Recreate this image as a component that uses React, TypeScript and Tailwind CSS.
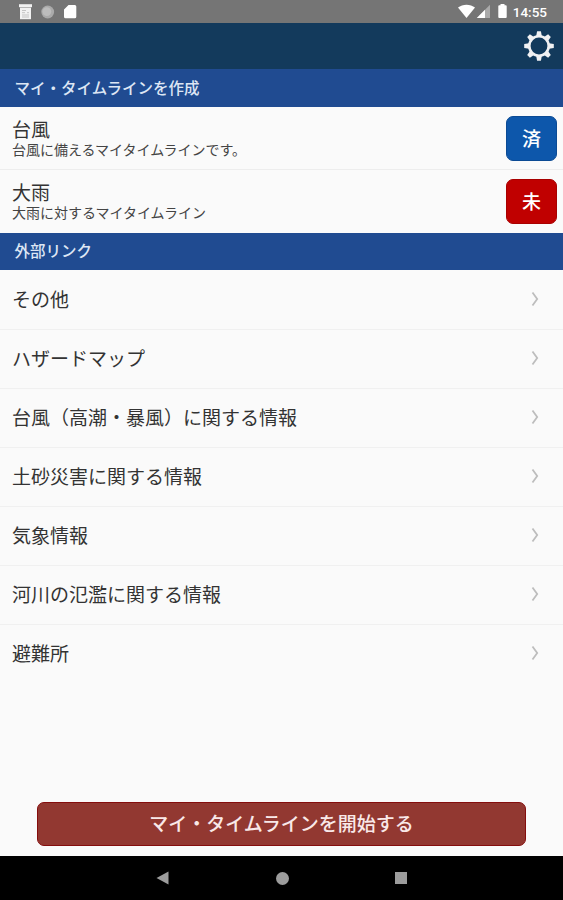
import clsx from 'clsx';

const TIMELINES = [
    { title: '台風', note: '台風に備えるマイタイムラインです。', badge: '済', done: true },
    { title: '大雨', note: '大雨に対するマイタイムライン', badge: '未', done: false },
];

const LINKS = [
    'その他',
    'ハザードマップ',
    '台風（高潮・暴風）に関する情報',
    '土砂災害に関する情報',
    '気象情報',
    '河川の氾濫に関する情報',
    '避難所',
];

const TEETH = [0, 45, 90, 135, 180, 225, 270, 315];

function StatusBar() {
    return (
        <div className="flex h-[23px] shrink-0 items-center bg-[#757575] pl-[18px] pr-[16px]">
            {/* Notifications */}
            <svg width="60" height="23" viewBox="0 0 60 23">
                <path d="M1 4.200h13v3H1z" fill="#f2f2f2" />
                <path d="M2 7.600h11v11.600H2z" fill="#f2f2f2" />
                <path d="M4 10.500h4M4 12.700h3M4 15h7M4 17h7M9 12.700h2" stroke="#c4c4c4" strokeWidth="1" />
                <circle cx="29.700" cy="12" r="6.400" fill="#aaa" />
                <circle cx="28.800" cy="11.600" r="4.400" fill="#bdbdbd" />
                <path d="M50.500 5h6.300a1.500 1.500 0 0 1 1.500 1.500v10.300a1.500 1.500 0 0 1-1.500 1.500h-9.300a1.500 1.500 0 0 1-1.500-1.500V9.500z" fill="#fff" />
            </svg>

            {/* Signal and battery */}
            <svg className="ml-auto" width="52" height="23" viewBox="0 0 52 23">
                <path d="M0 7.600C4.500 3.700 12.500 3.700 17 7.600L8.500 18z" fill="#fff" />
                <path d="M32 4.800V18H18.800z" fill="#aaa" />
                <path d="M27 9.800V18h-8.200z" fill="#fff" />
                <path d="M42.500 4h4v1.300h1.300a.9.9 0 0 1 .9.9v10.900a.9.9 0 0 1-.9.9h-6.600a.9.9 0 0 1-.9-.9V6.200a.9.9 0 0 1 .9-.9h1.300z" fill="#fff" />
            </svg>
            <span className="ml-[3px] font-['Roboto'] text-[13.5px] font-medium leading-[24px] text-white">
                14:55
            </span>
        </div>
    );
}

function GearIcon() {
    return (
        <svg width="30" height="30" viewBox="-15 -15 30 30">
            <circle r="9.700" fill="none" stroke="#f1f1f3" strokeWidth="2.600" />
            {TEETH.map((deg) => (
                <path
                    key={deg}
                    d="M-2.800-10L-1.900-14.800h3.800L2.800-10z"
                    fill="#f1f1f3"
                    transform={`rotate(${deg})`}
                />
            ))}
        </svg>
    );
}

function SectionHeader({ label, className }: { label: string; className: string }) {
    return (
        <h2
            className={clsx(
                'shrink-0 bg-[#204b91] pl-[14.5px] text-[15.5px] font-medium text-[#dde6f4]',
                className,
            )}
        >
            {label}
        </h2>
    );
}

export default function App() {
    return (
        <div className="flex h-[900px] w-[563px] flex-col overflow-hidden bg-[#fafafa] font-['Noto_Sans_CJK_JP',sans-serif] text-[#333]">
            <StatusBar />

            <header className="flex h-[46px] shrink-0 items-center justify-end bg-[#133a5c] pr-[9px]">
                <button type="button" aria-label="設定">
                    <GearIcon />
                </button>
            </header>

            <SectionHeader label="マイ・タイムラインを作成" className="h-[38px] leading-[37px]" />
            <ul className="shrink-0">
                {TIMELINES.map(({ title, note, badge, done }, i) => (
                    <li
                        key={title}
                        className={clsx(
                            'flex h-[63px] items-center justify-between pl-[12px] pr-[6px]',
                            i === 0 && 'border-b border-[#ededed]',
                        )}
                    >
                        <div className="pb-px">
                            <p className="text-[19px] leading-[22px]">{title}</p>
                            <p className="text-[14px] leading-[18px] text-[#444]">{note}</p>
                        </div>
                        <span
                            className={clsx(
                                'h-[45px] w-[51px] rounded-[7px] border text-center text-[19px] font-medium leading-[41px] text-white',
                                done ? 'border-[#0b4a94] bg-[#0d57ab]' : 'border-[#a80000] bg-[#c00000]',
                            )}
                        >
                            {badge}
                        </span>
                    </li>
                ))}
            </ul>

            <SectionHeader label="外部リンク" className="h-[37px] leading-[35px]" />
            <ul className="flex-1">
                {LINKS.map((label, i) => (
                    <li
                        key={label}
                        className={clsx(
                            'flex h-[59px] items-center justify-between pl-[12px] pr-[23px] text-[19px]',
                            i > 0 && 'border-t border-[#f0f0f0] pb-[2px]',
                        )}
                    >
                        {label}
                        <svg width="9" height="16" viewBox="0 0 9 16" className="-mt-px">
                            <path d="M1.500 1.500L6.200 8L1.500 14.500" fill="none" stroke="#bdbdbd" strokeWidth="1.800" />
                        </svg>
                    </li>
                ))}
            </ul>

            <button
                type="button"
                className="mb-[10px] ml-[37px] flex h-[44px] w-[489px] shrink-0 justify-center rounded-[7px] border border-[#850d0d] bg-[#923831] text-[19px] font-medium leading-[39px] text-[#f9e8e8]"
            >
                マイ・タイムラインを開始する
            </button>

            {/* System navigation */}
            <nav className="flex h-[44px] shrink-0 items-center justify-center gap-[106px] bg-black">
                <svg width="14" height="14" viewBox="0 0 14 14">
                    <path d="M12.500 .5v13L.5 7z" fill="#9c9c9c" />
                </svg>
                <span className="h-[13px] w-[13px] rounded-full bg-[#9c9c9c]" />
                <span className="h-[12px] w-[12px] bg-[#9c9c9c]" />
            </nav>
        </div>
    );
}
